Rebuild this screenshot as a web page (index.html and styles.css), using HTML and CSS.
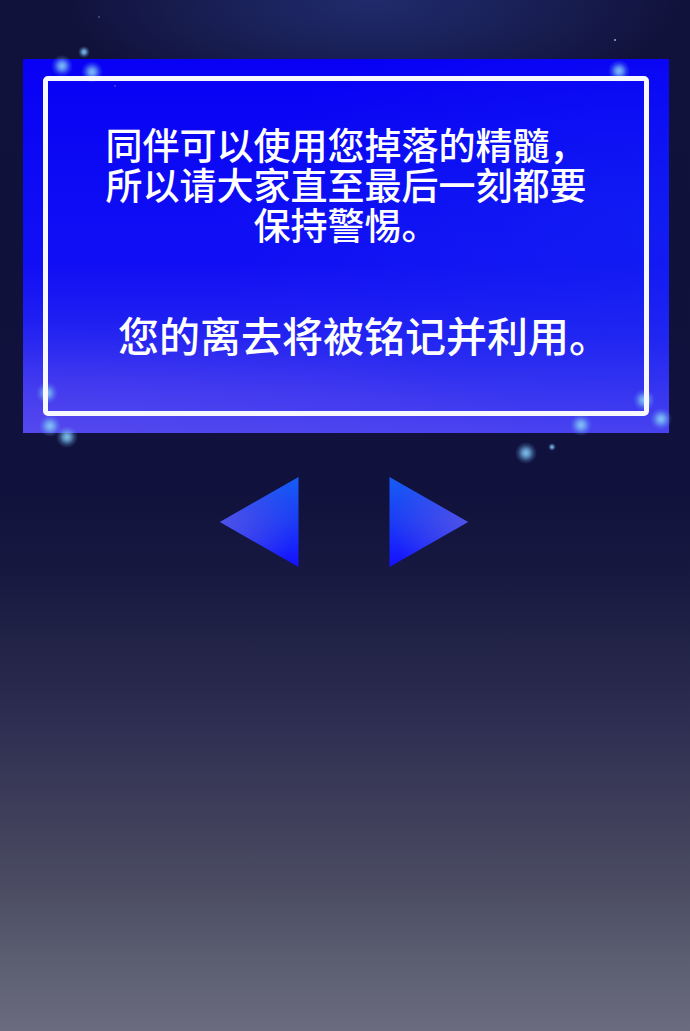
FILE: index.html
```
<!DOCTYPE html>
<html lang="zh-CN">
<head>
    <meta charset="UTF-8">
    <meta name="viewport" content="width=device-width, initial-scale=1.0">
    <title>同伴的精髓</title>
    <link rel="stylesheet" href="styles.css">
</head>
<body>
    <main class="page">
        <section class="panel">
            <!-- Sparkles around the corners -->
            <span class="spark spark-1"></span>
            <span class="spark spark-2"></span>
            <span class="spark small spark-3"></span>
            <span class="spark spark-4"></span>
            <span class="spark spark-5"></span>
            <span class="spark spark-6"></span>
            <span class="spark spark-7"></span>
            <span class="spark spark-8"></span>
            <span class="spark spark-9"></span>
            <span class="spark spark-10"></span>
            <span class="spark spark-11"></span>
            <span class="spark tiny spark-12"></span>
            <span class="star star-1"></span>
            <span class="star dim star-2"></span>
            <span class="star dim star-3"></span>

            <div class="frame">
                <p class="message">同伴可以使用您掉落的精髓，<br>所以请大家直至最后一刻都要<br>保持警惕。</p>
                <p class="closing">您的离去将被铭记并利用。</p>
            </div>
        </section>

        <nav class="controls">
            <button type="button" class="arrow" aria-label="上一页">
                <svg viewBox="0 0 79 90" width="79" height="90">
                    <defs>
                        <linearGradient id="fill" x1="0" y1="0" x2="0" y2="1">
                            <stop offset="0" stop-color="#185cf4"/>
                            <stop offset="0.5" stop-color="#1b3cf5"/>
                            <stop offset="1" stop-color="#1510ff"/>
                        </linearGradient>
                        <radialGradient id="tipLeft" gradientUnits="userSpaceOnUse" cx="0" cy="45" r="75">
                            <stop offset="0" stop-color="#5052e8"/>
                            <stop offset="1" stop-color="#5052e8" stop-opacity="0"/>
                        </radialGradient>
                        <radialGradient id="tipRight" gradientUnits="userSpaceOnUse" cx="79" cy="45" r="75">
                            <stop offset="0" stop-color="#5052e8"/>
                            <stop offset="1" stop-color="#5052e8" stop-opacity="0"/>
                        </radialGradient>
                    </defs>
                    <path d="M78.500 0V90L0 45Z" fill="url(#fill)"/>
                    <path d="M78.500 0V90L0 45Z" fill="url(#tipLeft)"/>
                </svg>
            </button>
            <button type="button" class="arrow" aria-label="下一页">
                <svg viewBox="0 0 79 90" width="79" height="90">
                    <path d="M0.500 0V90L79 45Z" fill="url(#fill)"/>
                    <path d="M0.500 0V90L79 45Z" fill="url(#tipRight)"/>
                </svg>
            </button>
        </nav>
    </main>
</body>
</html>
```
FILE: styles.css
```
* {
    box-sizing: border-box;
}
body {
    margin: 0;
    font-family: "Noto Sans CJK SC", sans-serif;
    color: white;
}
.page {
    min-height: 100vh;
    padding: 59px 21px 40px 23px;
    background:
        radial-gradient(ellipse 310px 110px at 54% 0, #202b6c 0%, rgba(32, 43, 108, 0.6) 45%, rgba(32, 43, 108, 0) 100%),
        linear-gradient(#11123b 0%, #10113c 47%, #161840 55%, #202246 62%, #2d2e51 70%, #3d3c59 78%, #4b4c63 86%, #5b5d70 93%, #6b6b80 100%);
}
.panel {
    position: relative;
    padding: 17px 20px;
    background:
        radial-gradient(ellipse 70% 60% at 100% 45%, rgba(20, 50, 240, 0.4), rgba(20, 50, 240, 0)),
        radial-gradient(ellipse 80% 30% at 0 100%, rgba(100, 80, 235, 0.4), rgba(100, 80, 235, 0)),
        linear-gradient(#0800f5 0%, #0c0af4 30%, #110ff4 55%, #2424f1 75%, #3c37f0 90%, #4a43f0 100%);
}
.frame {
    position: relative;
    min-height: 340px;
    padding: 43px 0 49px;
    border: 5px solid #f7f7ff;
    border-radius: 5px;
    text-align: center;
}
.message,
.closing {
    margin: 0;
    font-weight: 500;
}
.message {
    font-size: 37px;
    line-height: 40px;
}
.closing {
    margin-top: 65px;
    padding-left: 36px;
    font-size: 41px;
    line-height: 50px;
}

/* sparkles */
.spark {
    position: absolute;
    width: 22px;
    height: 22px;
    border-radius: 50%;
    background: radial-gradient(circle closest-side, rgba(140, 208, 250, 0.9) 0%, rgba(125, 195, 245, 0.75) 30%, rgba(110, 180, 240, 0.25) 70%, rgba(110, 180, 240, 0) 100%);
}
.spark.small {
    width: 12px;
    height: 12px;
}
.spark.tiny {
    width: 8px;
    height: 8px;
}
.spark-1 { left: 28px; top: -4px; }
.spark-2 { left: 58px; top: 2px; }
.spark-3 { left: 55px; top: -13px; }
.spark-4 { right: 39px; top: 1px; }
.spark-5 { left: 13px; bottom: 29px; }
.spark-6 { left: 16px; bottom: -4px; }
.spark-7 { left: 33px; bottom: -15px; }
.spark-8 { right: 14px; bottom: 22px; }
.spark-9 { right: -3px; bottom: 3px; }
.spark-10 { right: 77px; bottom: -3px; }
.spark-11 { right: 132px; bottom: -31px; }
.spark-12 { right: 113px; bottom: -18px; }

.star {
    position: absolute;
    width: 2px;
    height: 2px;
    border-radius: 50%;
    background-color: #a9abc9;
}
.star.dim {
    opacity: 0.4;
}
.star-1 { right: 53px; top: -20px; }
.star-2 { left: 75px; top: -43px; }
.star-3 { left: 91px; top: 26px; }

/* arrows */
.controls {
    display: flex;
    justify-content: center;
    gap: 90px;
    margin-top: 44px;
    padding-right: 4px;
}
.arrow {
    padding: 0;
    border: none;
    background: none;
    cursor: pointer;
}
.arrow svg {
    display: block;
}
.arrow:hover {
    opacity: 0.9;
}
```
